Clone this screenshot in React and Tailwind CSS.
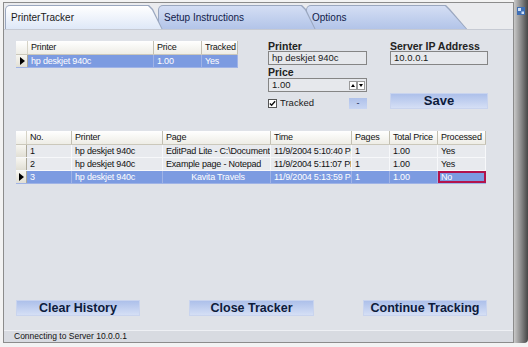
import React from 'react';

// column defs for the two data grids
const trackedCols = [
  { label: 'Printer', w: 'w-[126px]' },
  { label: 'Price', w: 'w-[48px]' },
  { label: 'Tracked', w: 'w-[36px]' },
];

const trackedRows = [['hp deskjet 940c', '1.00', 'Yes']];

const historyCols = [
  { label: 'No.', w: 'w-[45px]' },
  { label: 'Printer', w: 'w-[91px]' },
  { label: 'Page', w: 'w-[108px]' },
  { label: 'Time', w: 'w-[81px]' },
  { label: 'Pages', w: 'w-[38px]' },
  { label: 'Total Price', w: 'w-[48px]' },
  { label: 'Processed', w: 'w-[48px]' },
];

const historyRows = [
  ['1', 'hp deskjet 940c', 'EditPad Lite - C:\\Documents', '11/9/2004 5:10:40 PM', '1', '1.00', 'Yes'],
  ['2', 'hp deskjet 940c', 'Example page - Notepad', '11/9/2004 5:11:07 PM', '1', '1.00', 'Yes'],
  ['3', 'hp deskjet 940c', 'Kavita Travels', '11/9/2004 5:13:59 PM', '1', '1.00', 'No'],
];

function Grid({ cols, rows, rowHdr, selected, focusCell, centerCell }) {
  return (
    <div className="flex flex-col">
      {/* header */}
      <div className="flex h-[14px] bg-gradient-to-b from-white to-[#eeede6] border-b border-[#cbc8bb]">
        <div className={`${rowHdr} shrink-0 border-r border-[#d6d3c6]`} />
        {cols.map((c) => (
          <div
            key={c.label}
            className={`${c.w} shrink-0 border-r border-[#c2bfb1] pl-[3px] text-[9px] leading-[13px] tracking-[-0.2px] text-[#111] overflow-hidden whitespace-nowrap`}
          >
            {c.label}
          </div>
        ))}
      </div>
      {/* body */}
      {rows.map((r, ri) => {
        const sel = ri === selected;
        return (
          <div key={ri} className={`flex h-[13px] border-b ${sel ? 'border-[#9fb3e6]' : 'border-[#f7f8fa]'}`}>
            <div className={`${rowHdr} shrink-0 flex items-center justify-center bg-gradient-to-b from-[#f7f6f1] to-[#e1dfd5] border-r border-[#aca899]`}>
              {sel && <span className="block w-0 h-0 border-y-[4px] border-y-transparent border-l-[5px] border-l-black ml-[1px]" />}
            </div>
            {r.map((v, ci) => {
              const focus = sel && ci === focusCell;
              return (
                <div
                  key={ci}
                  className={`${cols[ci].w} shrink-0 overflow-hidden whitespace-nowrap text-[9px] tracking-[-0.2px] ${
                    sel ? 'bg-[#7c9be1] text-white' : 'bg-[#e8eaee] text-[#111]'
                  } ${focus ? 'border-2 border-[#b2134c] pl-[1px] leading-[8px]' : `border-r leading-[12px] ${sel ? 'border-[#9fb3e6]' : 'border-[#f7f8fa]'} pl-[3px]`} ${
                    sel && ci === centerCell ? 'text-center' : ''
                  }`}
                >
                  {v}
                </div>
              );
            })}
          </div>
        );
      })}
    </div>
  );
}

function Tab({ label, active, w, slant, z, ml }) {
  const clip = { clipPath: `polygon(0 0, calc(100% - ${slant}px) 0, calc(100% - ${slant - 4}px) 4px, 100% 100%, 0 100%)` };
  return (
    <div className={`relative ${w} ${ml} ${z} h-[25px] mt-[2px]`}>
      <div className="absolute inset-0 bg-[#9aa7bf] rounded-tl-[5px]" style={clip} />
      <div
        className={`absolute top-[1px] left-[1px] right-[1px] bottom-0 rounded-tl-[4px] ${
          active ? 'bg-gradient-to-b from-white to-[#dde7f7]' : 'bg-gradient-to-b from-[#d4def4] to-[#b1c3e8]'
        }`}
        style={clip}
      />
      <span className={`absolute left-[6px] top-[7px] text-[10px] leading-[12px] ${active ? 'text-[#1a1a1a]' : 'text-[#10204a]'}`}>
        {label}
      </span>
    </div>
  );
}

function BlueButton({ children, className }) {
  return (
    <div
      className={`flex items-center justify-center bg-gradient-to-b from-[#adc0ea] to-[#d5dff5] border border-[#c9d4ee] font-bold text-[#0d1b3b] ${className}`}
    >
      {children}
    </div>
  );
}

function Field({ value, className }) {
  return (
    <div className={`h-[14px] border border-[#858585] bg-[#e6e8ec] pl-[3px] text-[9.5px] leading-[12px] text-[#1a1a1a] ${className}`}>
      {value}
    </div>
  );
}

export default function App() {
  return (
    <div className="w-[528px] h-[347px] bg-[#f3f3f3] flex overflow-hidden font-['Liberation_Sans',Arial,sans-serif]">
      {/* main window */}
      <div className="ml-[3px] mt-[2px] w-[511px] h-[341px] border border-[#8c8c8c] bg-[#dfe2e8] flex flex-col">
        {/* tab strip */}
        <div className="h-[27px] bg-[#eaebee] border-b border-[#c6cad3] flex pl-[1px] overflow-hidden">
          <Tab label="PrinterTracker" active w="w-[158px]" slant={14} z="z-30" ml="" />
          <Tab label="Setup Instructions" w="w-[158px]" slant={14} z="z-20" ml="ml-[-5px]" />
          <Tab label="Options" w="w-[162px]" slant={22} z="z-10" ml="ml-[-10px]" />
        </div>

        {/* content */}
        <div className="flex-1 flex flex-col pl-[12px]">
          <div className="flex mt-[11px]">
            <div className="w-[222px]">
              <Grid cols={trackedCols} rows={trackedRows} rowHdr="w-[12px]" selected={0} />
            </div>

            {/* printer form */}
            <div className="ml-[30px] w-[99px] flex flex-col">
              <div className="h-[10px] text-[10.5px] leading-[10px] font-bold text-[#222]">Printer</div>
              <Field value="hp deskjet 940c" />
              <div className="h-[13px] pt-[2px] text-[10.5px] leading-[11px] font-bold text-[#222]">Price</div>
              <div className="h-[14px] border border-[#858585] bg-[#e6e8ec] flex items-center">
                <span className="flex-1 pl-[3px] text-[9.5px] leading-[12px] text-[#1a1a1a]">1.00</span>
                <span className="w-[8px] h-[9px] border border-[#9a9a9a] bg-white flex items-center justify-center">
                  <span className="block w-0 h-0 border-x-[2.5px] border-x-transparent border-b-[3px] border-b-black" />
                </span>
                <span className="w-[8px] h-[9px] mr-[1px] border border-[#9a9a9a] bg-white flex items-center justify-center">
                  <span className="block w-0 h-0 border-x-[2.5px] border-x-transparent border-t-[3px] border-t-black" />
                </span>
              </div>
              <div className="flex items-center mt-[5px] h-[12px]">
                <span className="w-[9px] h-[9px] border border-[#555] bg-white flex items-center justify-center">
                  <svg viewBox="0 0 8 8" className="w-[7px] h-[7px]">
                    <path d="M1 4 L3 6 L7 1.5" fill="none" stroke="#111" strokeWidth="1.6" />
                  </svg>
                </span>
                <span className="ml-[3px] text-[9.5px] text-[#1a1a1a]">Tracked</span>
                <span className="ml-auto w-[18px] h-[11px] bg-gradient-to-b from-[#aec1ea] to-[#c9d6f3] flex items-center justify-center text-[9px] leading-[9px] text-[#1b2a55]">
                  -
                </span>
              </div>
            </div>

            {/* server form */}
            <div className="ml-[23px] w-[98px] flex flex-col">
              <div className="h-[10px] text-[10.5px] leading-[10px] font-bold text-[#222] whitespace-nowrap">Server IP Address</div>
              <Field value="10.0.0.1" />
              <BlueButton className="mt-[28px] h-[16px] text-[13px]">Save</BlueButton>
            </div>
          </div>

          {/* history grid */}
          <div className="mt-[22px] w-[470px]">
            <Grid cols={historyCols} rows={historyRows} rowHdr="w-[11px]" selected={2} focusCell={6} centerCell={2} />
          </div>

          {/* bottom actions */}
          <div className="flex mt-[116px] gap-[49px]">
            <BlueButton className="w-[124px] h-[16px] text-[12.5px]">Clear History</BlueButton>
            <BlueButton className="w-[125px] h-[16px] text-[12.5px]">Close Tracker</BlueButton>
            <BlueButton className="w-[124px] h-[16px] text-[12.5px]">Continue Tracking</BlueButton>
          </div>
        </div>

        {/* status bar */}
        <div className="h-[12px] bg-[#d8dbe1] border-t border-[#eef0f4] pl-[10px] text-[8.5px] leading-[11px] text-[#111]">
          Connecting to Server 10.0.0.1
        </div>
      </div>

      {/* right edge shadow strip */}
      <div className="w-[14px] h-[343px] bg-gradient-to-r from-[#c9c9c9] via-[#8a8a8a] to-[#474747] rounded-br-[4px] flex justify-center pt-[7px]">
        <svg viewBox="0 0 8 8" className="w-[8px] h-[8px]">
          <rect x="0" y="0" width="8" height="8" fill="#3f6fb5" />
          <rect x="1" y="1" width="3" height="3" fill="#cfe0f7" />
          <rect x="4.5" y="4.5" width="2.5" height="2.5" fill="#cfe0f7" />
        </svg>
      </div>
    </div>
  );
}
